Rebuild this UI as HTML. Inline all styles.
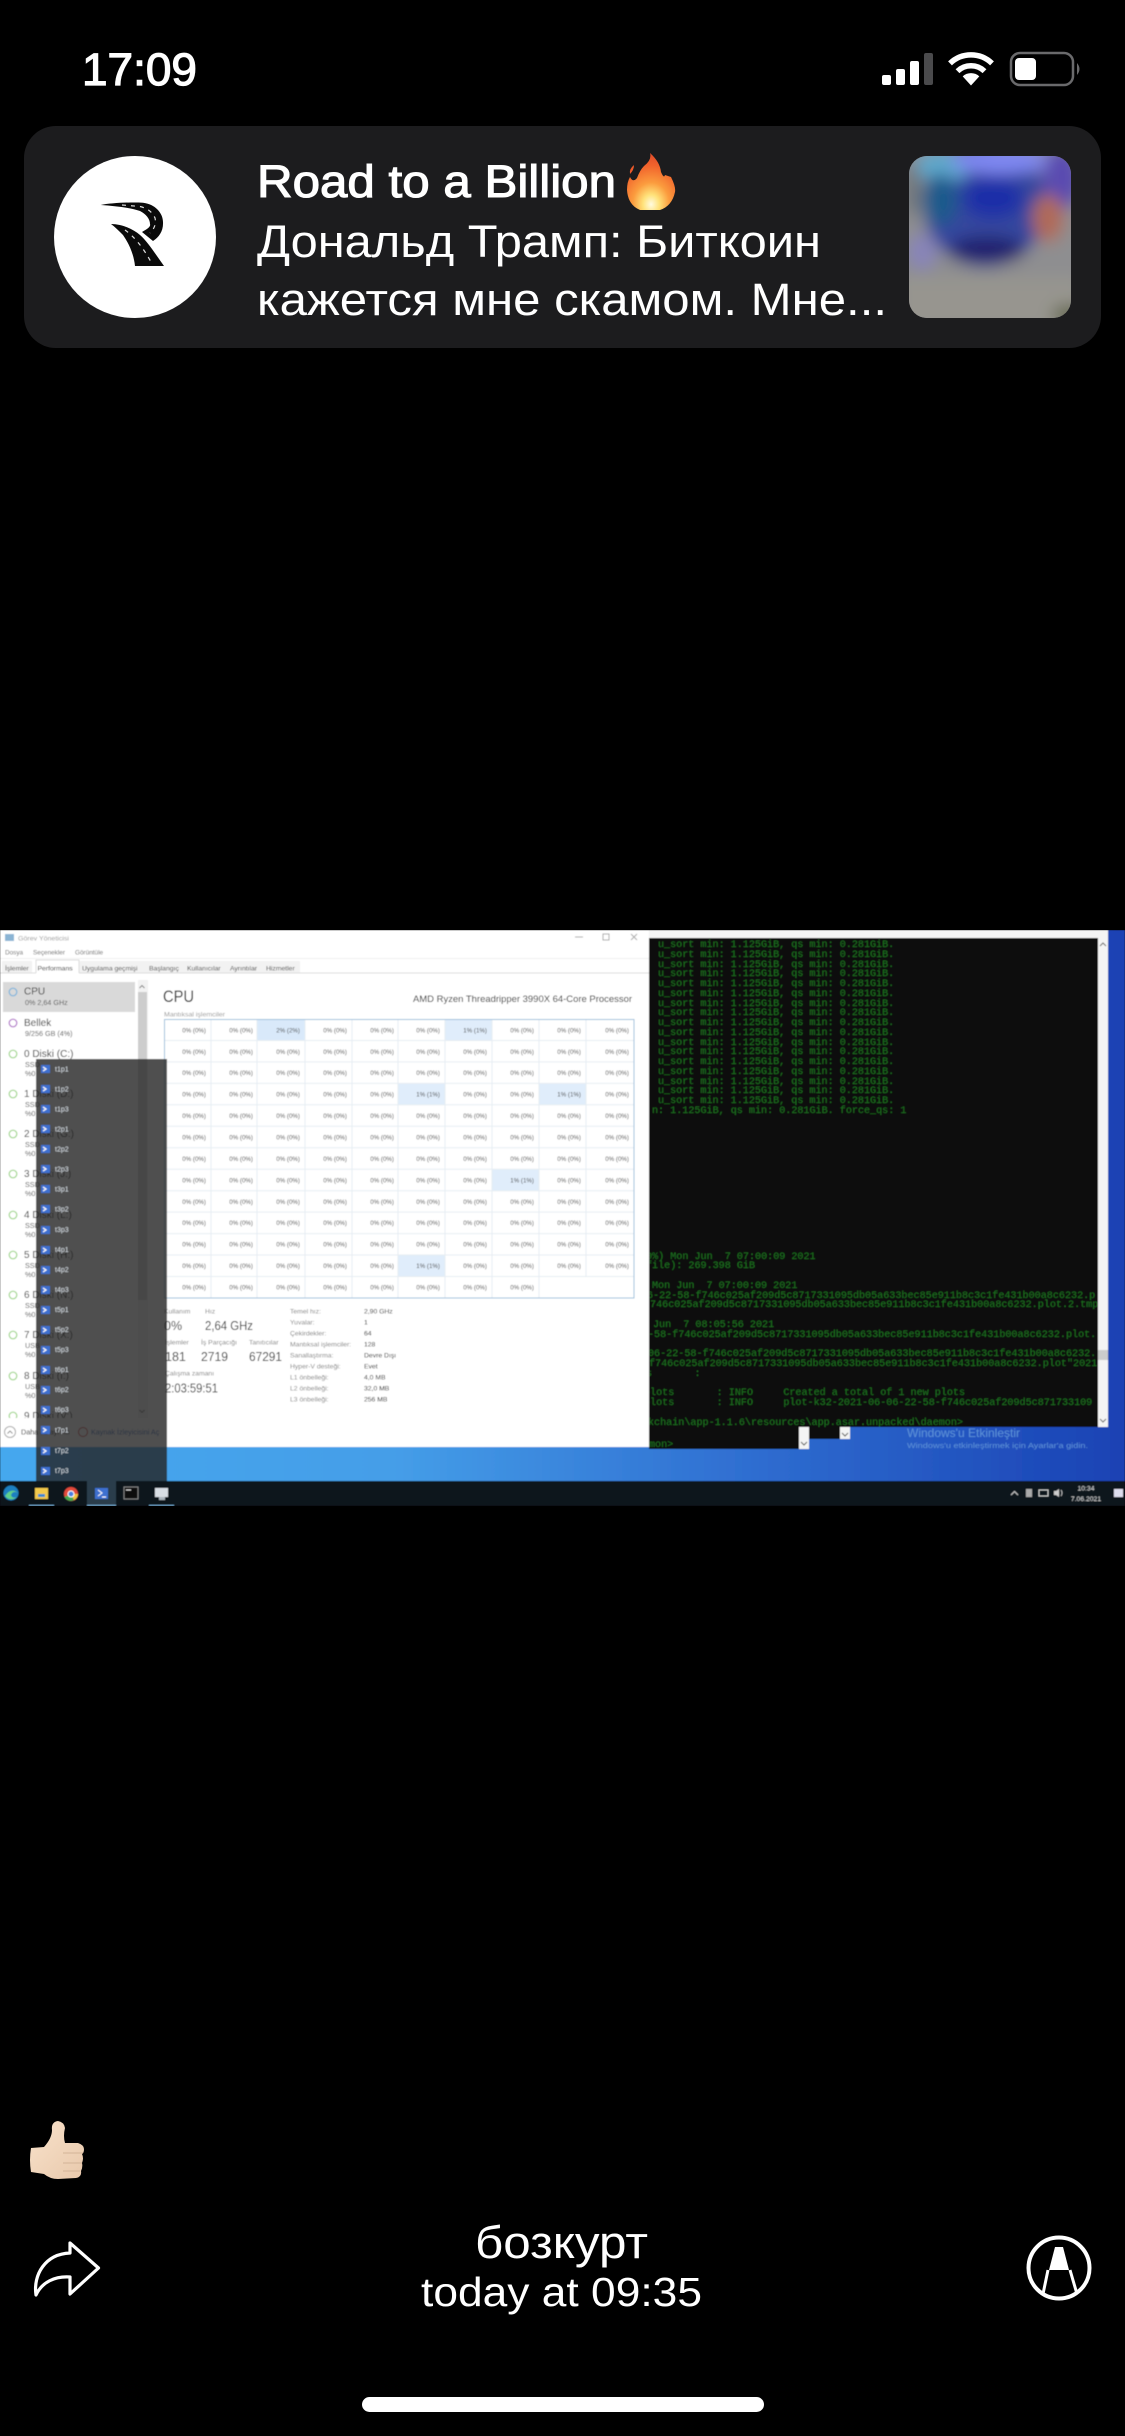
<!DOCTYPE html>
<html><head><meta charset="utf-8"><title>Screenshot</title>
<style>
html,body{margin:0;padding:0;background:#000;width:1125px;height:2436px;overflow:hidden}
svg{display:block;position:absolute;left:0;top:0}
text{font-family:"Liberation Sans",sans-serif}
.m{font-family:"Liberation Mono",monospace;font-size:10.1px;fill:#1b7320;white-space:pre}
.cell{font-size:6.2px;fill:#444}
.lbl{font-size:6.8px;fill:#808080}
.val{font-size:6.8px;fill:#222}
.big{font-size:12.5px;fill:#333}
.sb{font-size:7.2px;fill:#555}
.nm{font-size:10px;fill:#333}
.ov{font-size:7px;fill:#d4dbe2}
</style></head><body>
<svg width="1125" height="2436" viewBox="0 0 1125 2436" xmlns="http://www.w3.org/2000/svg">
<defs>
<filter id="b" x="-5%" y="-5%" width="110%" height="110%"><feGaussianBlur stdDeviation="0.6"/></filter>
<filter id="tb" x="-30%" y="-30%" width="160%" height="160%"><feGaussianBlur stdDeviation="8"/></filter>
<clipPath id="tc"><rect x="909" y="156" width="162" height="162" rx="18"/></clipPath>
<clipPath id="term"><rect x="649" y="938" width="449" height="489"/></clipPath>
<clipPath id="side"><rect x="0" y="980" width="137" height="438"/></clipPath>
<clipPath id="shot"><rect x="0" y="930" width="1125" height="576"/></clipPath>
<linearGradient id="wall" x1="0" x2="1" y1="0" y2="0"><stop offset="0" stop-color="#45a8ee"/><stop offset=".35" stop-color="#459ee8"/><stop offset=".65" stop-color="#3070d2"/><stop offset="1" stop-color="#1a42b4"/></linearGradient>
<radialGradient id="fire" cx=".5" cy=".9" r=".85"><stop offset="0" stop-color="#fffbe0"/><stop offset=".2" stop-color="#ffe27a"/><stop offset=".45" stop-color="#fb9c3e"/><stop offset=".8" stop-color="#f1632c"/><stop offset="1" stop-color="#e4502a"/></radialGradient>
<linearGradient id="skin" x1="0" x2="1" y1="0" y2="1"><stop offset="0" stop-color="#f9e2cb"/><stop offset="1" stop-color="#e8c9ac"/></linearGradient>
</defs>
<rect width="1125" height="2436" fill="#000"/>

<!-- status bar -->
<text x="82" y="85" font-size="45" fill="#fff" stroke="#fff" stroke-width="1.200" textLength="115" lengthAdjust="spacingAndGlyphs">17:09</text>
<rect x="882" y="75" width="9" height="10" rx="2" fill="#fff"/>
<rect x="896" y="69" width="9" height="16" rx="2" fill="#fff"/>
<rect x="910" y="61" width="9" height="24" rx="2" fill="#fff"/>
<rect x="924" y="53" width="9" height="32" rx="2" fill="#4a4a4c"/>
<path d="M950 63.400 A30.250 30.250 0 0 1 992 63.400" fill="none" stroke="#fff" stroke-width="5.500"/>
<path d="M957.500 71.200 A19.500 19.500 0 0 1 984.500 71.200" fill="none" stroke="#fff" stroke-width="5.500"/>
<path d="M971 85.500 L962.700 76.400 A12 12 0 0 1 979.300 76.400 Z" fill="#fff"/>
<rect x="1011" y="53" width="62" height="32" rx="9" fill="none" stroke="#6a6a6c" stroke-width="2.500"/>
<rect x="1015" y="58" width="21" height="22" rx="4" fill="#fff"/>
<path d="M1077 63 Q1082 69 1077 75 Z" fill="#6a6a6c"/>

<!-- notification -->
<rect x="24" y="126" width="1077" height="222" rx="32" fill="#1c1c1e"/>
<circle cx="135" cy="237" r="81" fill="#fff"/>
<path d="M100.700 205 C110 203 130 202 143 202.700 C155 204 163 213 163 222 C163.500 231 159 237 153 241 L142 232 C147 229 151 227 150 224 C150 219 146 214 140 211 C130 207.500 115 206 100.700 205 Z" fill="#0a0a0a"/>
<path d="M111 224 C122 224 133 229 140 235 C148 242 156 255 164 266 L135 266 C134 256 130 245 123 235 C119 231 115 227 111 224 Z" fill="#0a0a0a"/>
<path d="M122 205 L140 206.500 Q151 209 155 218 Q157 226 150 233" fill="none" stroke="#ddd" stroke-width="1.200" stroke-dasharray="4 5"/>
<path d="M125 230 Q139 240 151 262" fill="none" stroke="#ddd" stroke-width="1.200" stroke-dasharray="4 5"/>
<g clip-path="url(#tc)">
<rect x="909" y="156" width="162" height="162" fill="#8a8c90"/>
<g filter="url(#tb)">
<rect x="890" y="140" width="210" height="200" fill="#8e8e90"/>
<ellipse cx="985" cy="205" rx="62" ry="62" fill="#34479e"/>
<ellipse cx="1062" cy="178" rx="20" ry="32" fill="#5a4cb0"/>
<ellipse cx="943" cy="166" rx="28" ry="16" fill="#5ea8cc"/>
<ellipse cx="1000" cy="160" rx="48" ry="14" fill="#7f88f2"/>
<ellipse cx="993" cy="198" rx="30" ry="20" fill="#1e2ea8"/>
<ellipse cx="940" cy="200" rx="18" ry="26" fill="#1f5a8c"/>
<ellipse cx="987" cy="250" rx="38" ry="14" fill="#22246e"/>
<ellipse cx="1048" cy="218" rx="16" ry="24" fill="#b06a58"/>
<ellipse cx="922" cy="252" rx="14" ry="18" fill="#8884ba"/>
<rect x="900" y="278" width="180" height="50" fill="#97958f"/>
<ellipse cx="1070" cy="315" rx="18" ry="10" fill="#64684c"/>
<ellipse cx="912" cy="190" rx="9" ry="28" fill="#6f767a"/>
</g>
</g>
<text x="257" y="197" font-size="45" fill="#fff" stroke="#fff" stroke-width="1.100" textLength="359" lengthAdjust="spacingAndGlyphs">Road to a Billion</text>
<path d="M650 153 Q660 162 661 172 Q664 179 665 175 Q668 176 671 177 Q676 187 675 192 Q672 206 660 210 L640 210 Q628 205 627 190 Q627 182 630 177 Q633 183 637 178 Q640 170 644 166 Q652 160 650 153 Z" fill="url(#fire)"/>
<path d="M634 165 Q634 170 630 174 Q629 169 634 165 Z" fill="#ee5a2a"/>
<text x="257" y="257" font-size="45" fill="#fff" textLength="564" lengthAdjust="spacingAndGlyphs">Дональд Трамп: Биткоин</text>
<text x="257" y="315" font-size="45" fill="#fff" textLength="630" lengthAdjust="spacingAndGlyphs">кажется мне скамом. Мне...</text>

<!-- screenshot -->
<g clip-path="url(#shot)"><g filter="url(#b)">
<rect x="0" y="930" width="1125" height="576" fill="url(#wall)"/>

<!-- terminals -->
<rect x="649" y="930" width="459" height="497" fill="#f4f4f4"/>
<rect x="649" y="938" width="449" height="489" fill="#0d0d0d"/>
<path d="M1100 946 L1103 943 L1106 946" fill="none" stroke="#666" stroke-width="1"/>
<path d="M1100 1419 L1103 1422 L1106 1419" fill="none" stroke="#666" stroke-width="1"/>
<rect x="1098" y="1350" width="10" height="10" fill="#ccc"/>
<rect x="649" y="1427" width="150" height="22" fill="#0d0d0d"/>
<rect x="799" y="1427" width="10" height="22" fill="#f4f4f4"/>
<path d="M801 1442 L804 1445 L807 1442" fill="none" stroke="#555" stroke-width="1"/>
<rect x="809" y="1427" width="31" height="12" fill="#0d0d0d"/>
<rect x="840" y="1427" width="10" height="12" fill="#f4f4f4"/>
<path d="M842 1433 L845 1436 L848 1433" fill="none" stroke="#555" stroke-width="1"/>
<g clip-path="url(#term)">
<text class="m" x="658" y="947">u_sort min: 1.125GiB, qs min: 0.281GiB.</text>
<text class="m" x="658" y="957">u_sort min: 1.125GiB, qs min: 0.281GiB.</text>
<text class="m" x="658" y="967">u_sort min: 1.125GiB, qs min: 0.281GiB.</text>
<text class="m" x="658" y="976">u_sort min: 1.125GiB, qs min: 0.281GiB.</text>
<text class="m" x="658" y="986">u_sort min: 1.125GiB, qs min: 0.281GiB.</text>
<text class="m" x="658" y="996">u_sort min: 1.125GiB, qs min: 0.281GiB.</text>
<text class="m" x="658" y="1006">u_sort min: 1.125GiB, qs min: 0.281GiB.</text>
<text class="m" x="658" y="1015">u_sort min: 1.125GiB, qs min: 0.281GiB.</text>
<text class="m" x="658" y="1025">u_sort min: 1.125GiB, qs min: 0.281GiB.</text>
<text class="m" x="658" y="1035">u_sort min: 1.125GiB, qs min: 0.281GiB.</text>
<text class="m" x="658" y="1045">u_sort min: 1.125GiB, qs min: 0.281GiB.</text>
<text class="m" x="658" y="1054">u_sort min: 1.125GiB, qs min: 0.281GiB.</text>
<text class="m" x="658" y="1064">u_sort min: 1.125GiB, qs min: 0.281GiB.</text>
<text class="m" x="658" y="1074">u_sort min: 1.125GiB, qs min: 0.281GiB.</text>
<text class="m" x="658" y="1084">u_sort min: 1.125GiB, qs min: 0.281GiB.</text>
<text class="m" x="658" y="1093">u_sort min: 1.125GiB, qs min: 0.281GiB.</text>
<text class="m" x="658" y="1103">u_sort min: 1.125GiB, qs min: 0.281GiB.</text>
<text class="m" x="652" y="1113">n: 1.125GiB, qs min: 0.281GiB. force_qs: 1</text>
<text class="m" x="646" y="1259">0%) Mon Jun  7 07:00:09 2021</text>
<text class="m" x="646" y="1268">file): 269.398 GiB</text>
<text class="m" x="652" y="1288">Mon Jun  7 07:00:09 2021</text>
<text class="m" x="647" y="1298">6-22-58-f746c025af209d5c8717331095db05a633bec85e911b8c3c1fe431b00a8c6232.p</text>
<text class="m" x="644" y="1307">f746c025af209d5c8717331095db05a633bec85e911b8c3c1fe431b00a8c6232.plot.2.tmp</text>
<text class="m" x="653" y="1327">Jun  7 08:05:56 2021</text>
<text class="m" x="648" y="1337">-58-f746c025af209d5c8717331095db05a633bec85e911b8c3c1fe431b00a8c6232.plot.</text>
<text class="m" x="648" y="1356">06-22-58-f746c025af209d5c8717331095db05a633bec85e911b8c3c1fe431b00a8c6232.</text>
<text class="m" x="649" y="1366">f746c025af209d5c8717331095db05a633bec85e911b8c3c1fe431b00a8c6232.plot"2021</text>
<text class="m" x="646" y="1376">s       :</text>
<text class="m" x="644" y="1395">plots       : INFO     Created a total of 1 new plots</text>
<text class="m" x="644" y="1405">plots       : INFO     plot-k32-2021-06-06-22-58-f746c025af209d5c871733109</text>
<text class="m" x="648" y="1425">kchain\app-1.1.6\resources\app.asar.unpacked\daemon&gt;</text>
</g>
<text class="m" x="649" y="1447">mon&gt;</text>
<text x="907" y="1437" font-size="12" fill="#5c92d8" textLength="113" lengthAdjust="spacingAndGlyphs">Windows'u Etkinleştir</text>
<text x="907" y="1448" font-size="7.6" fill="#5c92d8" textLength="181" lengthAdjust="spacingAndGlyphs">Windows'u etkinleştirmek için Ayarlar'a gidin.</text>

<!-- task manager -->
<rect x="0" y="930" width="649" height="517" fill="#fff"/>
<rect x="5" y="934" width="9" height="7" fill="#8ab4d4"/>
<text x="18" y="940.500" font-size="6.8" fill="#999" textLength="51" lengthAdjust="spacingAndGlyphs">Görev Yöneticisi</text>
<text y="954.500" font-size="6.4" fill="#666"><tspan x="5">Dosya</tspan><tspan x="33">Seçenekler</tspan><tspan x="75">Görüntüle</tspan></text>
<path d="M575 937 H583" stroke="#aaa" stroke-width="1"/>
<rect x="603" y="934" width="6" height="6" fill="none" stroke="#aaa" stroke-width="1"/>
<path d="M631 934 L637 940 M637 934 L631 940" stroke="#aaa" stroke-width="1"/>
<path d="M0 958.500 H649" stroke="#f0f0f0" stroke-width="1"/>
<rect x="2" y="961" width="30" height="12" fill="#f2f2f2"/>
<rect x="79" y="961" width="221" height="12" fill="#f2f2f2"/>
<path d="M0 973 H36 M79 973 H649" stroke="#dcdcdc" stroke-width="1"/>
<path d="M36 973 V960 H79 V973" fill="#fff" stroke="#dcdcdc" stroke-width="1"/>
<text y="970.500" font-size="6.8" fill="#444"><tspan x="5">İşlemler</tspan><tspan x="37.500" fill="#222">Performans</tspan><tspan x="82">Uygulama geçmişi</tspan><tspan x="149">Başlangıç</tspan><tspan x="187">Kullanıcılar</tspan><tspan x="230">Ayrıntılar</tspan><tspan x="266">Hizmetler</tspan></text>

<rect x="3" y="982" width="132" height="30" fill="#d9d9d9"/>
<rect x="138" y="980" width="10" height="438" fill="#f2f2f2"/>
<rect x="138" y="992" width="9" height="308" fill="#cdcdcd"/>
<path d="M139.500 988 L142 985.500 L144.500 988" fill="none" stroke="#777" stroke-width=".9"/>
<path d="M139.500 1410 L142 1412.500 L144.500 1410" fill="none" stroke="#777" stroke-width=".9"/>
<g clip-path="url(#side)">
<g fill="none" stroke-width="1.200">
<circle cx="13" cy="992" r="3.800" stroke="#7eb4dc"/>
<circle cx="13" cy="1023" r="3.800" stroke="#b070c8"/>
<g stroke="#9fd68a">
<circle cx="13" cy="1054" r="3.800"/><circle cx="13" cy="1094" r="3.800"/><circle cx="13" cy="1134" r="3.800"/><circle cx="13" cy="1174" r="3.800"/><circle cx="13" cy="1215" r="3.800"/><circle cx="13" cy="1255" r="3.800"/><circle cx="13" cy="1295" r="3.800"/><circle cx="13" cy="1335" r="3.800"/><circle cx="13" cy="1376" r="3.800"/><circle cx="13" cy="1416" r="3.800"/>
</g></g>
<text class="nm" x="24" y="994.500">CPU</text><text class="sb" x="25" y="1005">0% 2,64 GHz</text>
<text class="nm" x="24" y="1026">Bellek</text><text class="sb" x="25" y="1036">9/256 GB (4%)</text>
<text class="nm" x="24" y="1057">0 Diski (C:)</text><text class="sb" x="25" y="1067">SSD</text><text class="sb" x="25" y="1076">%0</text>
<text class="nm" x="24" y="1097">1 Diski (D:)</text><text class="sb" x="25" y="1107">SSD</text><text class="sb" x="25" y="1116">%0</text>
<text class="nm" x="24" y="1137">2 Diski (G:)</text><text class="sb" x="25" y="1147">SSD</text><text class="sb" x="25" y="1156">%0</text>
<text class="nm" x="24" y="1177">3 Diski (J:)</text><text class="sb" x="25" y="1187">SSD</text><text class="sb" x="25" y="1196">%0</text>
<text class="nm" x="24" y="1218">4 Diski (L:)</text><text class="sb" x="25" y="1228">SSD</text><text class="sb" x="25" y="1237">%0</text>
<text class="nm" x="24" y="1258">5 Diski (H:)</text><text class="sb" x="25" y="1268">SSD</text><text class="sb" x="25" y="1277">%0</text>
<text class="nm" x="24" y="1298">6 Diski (N:)</text><text class="sb" x="25" y="1308">SSD</text><text class="sb" x="25" y="1317">%0</text>
<text class="nm" x="24" y="1338">7 Diski (X:)</text><text class="sb" x="25" y="1348">USB</text><text class="sb" x="25" y="1357">%0</text>
<text class="nm" x="24" y="1379">8 Diski (I:)</text><text class="sb" x="25" y="1389">USB</text><text class="sb" x="25" y="1398">%0</text>
<text class="nm" x="24" y="1419">9 Diski (V:)</text>
</g>
<circle cx="10" cy="1432" r="5.500" fill="none" stroke="#aaa" stroke-width="1"/>
<path d="M7.500 1433.500 L10 1431 L12.500 1433.500" fill="none" stroke="#888" stroke-width=".9"/>
<text x="21" y="1434.500" font-size="7.2" fill="#333">Daha az ayrıntı</text>
<circle cx="83" cy="1432" r="4.500" fill="none" stroke="#d05050" stroke-width="1"/>
<text x="91" y="1434.500" font-size="7.2" fill="#3a66b8">Kaynak İzleyicisini Aç</text>

<text x="163" y="1002" font-size="16.500" fill="#222" textLength="31" lengthAdjust="spacingAndGlyphs">CPU</text>
<text x="164" y="1016.500" font-size="6.200" fill="#999" textLength="61" lengthAdjust="spacingAndGlyphs">Mantıksal işlemciler</text>
<text x="413" y="1002" font-size="9.500" fill="#222" textLength="219" lengthAdjust="spacingAndGlyphs">AMD Ryzen Threadripper 3990X 64-Core Processor</text>

<rect x="257" y="1019" width="48" height="21.500" fill="#d9e9fa"/>
<rect x="445" y="1019" width="47" height="21.500" fill="#e0edfb"/>
<rect x="398" y="1083.400" width="47" height="21.500" fill="#e0edfb"/>
<rect x="539" y="1083.400" width="47" height="21.500" fill="#e0edfb"/>
<rect x="492" y="1169.200" width="47" height="21.500" fill="#e0edfb"/>
<rect x="398" y="1255" width="47" height="21.500" fill="#e0edfb"/>
<path d="M164 1040.500H634M164 1061.900H634M164 1083.400H634M164 1104.800H634M164 1126.300H634M164 1147.800H634M164 1169.200H634M164 1190.700H634M164 1212.100H634M164 1233.600H634M164 1255H634M164 1276.500H634M211 1019V1298M257 1019V1298M305 1019V1298M352 1019V1298M398 1019V1298M445 1019V1298M492 1019V1298M539 1019V1298M586 1019V1276.500" stroke="#e6edf3" stroke-width="1" fill="none"/>
<rect x="164.500" y="1019.500" width="469.500" height="278.500" fill="none" stroke="#9cc0dc" stroke-width="1"/>

<g text-anchor="end">
<text class="cell" y="1032.500"><tspan x="206">0% (0%)</tspan><tspan x="253">0% (0%)</tspan><tspan x="300">2% (2%)</tspan><tspan x="347">0% (0%)</tspan><tspan x="394">0% (0%)</tspan><tspan x="440">0% (0%)</tspan><tspan x="487">1% (1%)</tspan><tspan x="534">0% (0%)</tspan><tspan x="581">0% (0%)</tspan><tspan x="629">0% (0%)</tspan></text>
<text class="cell" y="1054"><tspan x="206">0% (0%)</tspan><tspan x="253">0% (0%)</tspan><tspan x="300">0% (0%)</tspan><tspan x="347">0% (0%)</tspan><tspan x="394">0% (0%)</tspan><tspan x="440">0% (0%)</tspan><tspan x="487">0% (0%)</tspan><tspan x="534">0% (0%)</tspan><tspan x="581">0% (0%)</tspan><tspan x="629">0% (0%)</tspan></text>
<text class="cell" y="1075"><tspan x="206">0% (0%)</tspan><tspan x="253">0% (0%)</tspan><tspan x="300">0% (0%)</tspan><tspan x="347">0% (0%)</tspan><tspan x="394">0% (0%)</tspan><tspan x="440">0% (0%)</tspan><tspan x="487">0% (0%)</tspan><tspan x="534">0% (0%)</tspan><tspan x="581">0% (0%)</tspan><tspan x="629">0% (0%)</tspan></text>
<text class="cell" y="1096.500"><tspan x="206">0% (0%)</tspan><tspan x="253">0% (0%)</tspan><tspan x="300">0% (0%)</tspan><tspan x="347">0% (0%)</tspan><tspan x="394">0% (0%)</tspan><tspan x="440">1% (1%)</tspan><tspan x="487">0% (0%)</tspan><tspan x="534">0% (0%)</tspan><tspan x="581">1% (1%)</tspan><tspan x="629">0% (0%)</tspan></text>
<text class="cell" y="1118"><tspan x="206">0% (0%)</tspan><tspan x="253">0% (0%)</tspan><tspan x="300">0% (0%)</tspan><tspan x="347">0% (0%)</tspan><tspan x="394">0% (0%)</tspan><tspan x="440">0% (0%)</tspan><tspan x="487">0% (0%)</tspan><tspan x="534">0% (0%)</tspan><tspan x="581">0% (0%)</tspan><tspan x="629">0% (0%)</tspan></text>
<text class="cell" y="1139.500"><tspan x="206">0% (0%)</tspan><tspan x="253">0% (0%)</tspan><tspan x="300">0% (0%)</tspan><tspan x="347">0% (0%)</tspan><tspan x="394">0% (0%)</tspan><tspan x="440">0% (0%)</tspan><tspan x="487">0% (0%)</tspan><tspan x="534">0% (0%)</tspan><tspan x="581">0% (0%)</tspan><tspan x="629">0% (0%)</tspan></text>
<text class="cell" y="1161"><tspan x="206">0% (0%)</tspan><tspan x="253">0% (0%)</tspan><tspan x="300">0% (0%)</tspan><tspan x="347">0% (0%)</tspan><tspan x="394">0% (0%)</tspan><tspan x="440">0% (0%)</tspan><tspan x="487">0% (0%)</tspan><tspan x="534">0% (0%)</tspan><tspan x="581">0% (0%)</tspan><tspan x="629">0% (0%)</tspan></text>
<text class="cell" y="1182.500"><tspan x="206">0% (0%)</tspan><tspan x="253">0% (0%)</tspan><tspan x="300">0% (0%)</tspan><tspan x="347">0% (0%)</tspan><tspan x="394">0% (0%)</tspan><tspan x="440">0% (0%)</tspan><tspan x="487">0% (0%)</tspan><tspan x="534">1% (1%)</tspan><tspan x="581">0% (0%)</tspan><tspan x="629">0% (0%)</tspan></text>
<text class="cell" y="1204"><tspan x="206">0% (0%)</tspan><tspan x="253">0% (0%)</tspan><tspan x="300">0% (0%)</tspan><tspan x="347">0% (0%)</tspan><tspan x="394">0% (0%)</tspan><tspan x="440">0% (0%)</tspan><tspan x="487">0% (0%)</tspan><tspan x="534">0% (0%)</tspan><tspan x="581">0% (0%)</tspan><tspan x="629">0% (0%)</tspan></text>
<text class="cell" y="1225"><tspan x="206">0% (0%)</tspan><tspan x="253">0% (0%)</tspan><tspan x="300">0% (0%)</tspan><tspan x="347">0% (0%)</tspan><tspan x="394">0% (0%)</tspan><tspan x="440">0% (0%)</tspan><tspan x="487">0% (0%)</tspan><tspan x="534">0% (0%)</tspan><tspan x="581">0% (0%)</tspan><tspan x="629">0% (0%)</tspan></text>
<text class="cell" y="1246.500"><tspan x="206">0% (0%)</tspan><tspan x="253">0% (0%)</tspan><tspan x="300">0% (0%)</tspan><tspan x="347">0% (0%)</tspan><tspan x="394">0% (0%)</tspan><tspan x="440">0% (0%)</tspan><tspan x="487">0% (0%)</tspan><tspan x="534">0% (0%)</tspan><tspan x="581">0% (0%)</tspan><tspan x="629">0% (0%)</tspan></text>
<text class="cell" y="1268"><tspan x="206">0% (0%)</tspan><tspan x="253">0% (0%)</tspan><tspan x="300">0% (0%)</tspan><tspan x="347">0% (0%)</tspan><tspan x="394">0% (0%)</tspan><tspan x="440">1% (1%)</tspan><tspan x="487">0% (0%)</tspan><tspan x="534">0% (0%)</tspan><tspan x="581">0% (0%)</tspan><tspan x="629">0% (0%)</tspan></text>
<text class="cell" y="1289.500"><tspan x="206">0% (0%)</tspan><tspan x="253">0% (0%)</tspan><tspan x="300">0% (0%)</tspan><tspan x="347">0% (0%)</tspan><tspan x="394">0% (0%)</tspan><tspan x="440">0% (0%)</tspan><tspan x="487">0% (0%)</tspan><tspan x="534">0% (0%)</tspan></text>
</g>

<text class="lbl" y="1313.500"><tspan x="164">Kullanım</tspan><tspan x="205">Hız</tspan></text>
<text class="big" x="164" y="1330">0%</text>
<text class="big" x="205" y="1330" textLength="48" lengthAdjust="spacingAndGlyphs">2,64 GHz</text>
<text class="lbl" y="1344.500"><tspan x="165">İşlemler</tspan><tspan x="201">İş Parçacığı</tspan><tspan x="249">Tanıtıcılar</tspan></text>
<text class="big" x="165" y="1361">181</text>
<text class="big" x="201" y="1361" textLength="27" lengthAdjust="spacingAndGlyphs">2719</text>
<text class="big" x="249" y="1361" textLength="33" lengthAdjust="spacingAndGlyphs">67291</text>
<text class="lbl" x="165" y="1375.500">Çalışma zamanı</text>
<text class="big" x="165" y="1392.500" textLength="53" lengthAdjust="spacingAndGlyphs">2:03:59:51</text>
<text class="lbl" x="290" y="1313.500">Temel hız:</text><text class="val" x="364" y="1313.500">2,90 GHz</text>
<text class="lbl" x="290" y="1324.500">Yuvalar:</text><text class="val" x="364" y="1324.500">1</text>
<text class="lbl" x="290" y="1335.500">Çekirdekler:</text><text class="val" x="364" y="1335.500">64</text>
<text class="lbl" x="290" y="1346.500">Mantıksal işlemciler:</text><text class="val" x="364" y="1346.500">128</text>
<text class="lbl" x="290" y="1357.500">Sanallaştırma:</text><text class="val" x="364" y="1357.500">Devre Dışı</text>
<text class="lbl" x="290" y="1368.500">Hyper-V desteği:</text><text class="val" x="364" y="1368.500">Evet</text>
<text class="lbl" x="290" y="1379.500">L1 önbelleği:</text><text class="val" x="364" y="1379.500">4,0 MB</text>
<text class="lbl" x="290" y="1390.500">L2 önbelleği:</text><text class="val" x="364" y="1390.500">32,0 MB</text>
<text class="lbl" x="290" y="1401.500">L3 önbelleği:</text><text class="val" x="364" y="1401.500">256 MB</text>

<!-- jump list overlay -->
<rect x="36" y="1059" width="131" height="422" fill="#242424" fill-opacity=".8"/>
<g fill="#3d6fd0">
<rect x="41" y="1065" width="9" height="8"/><rect x="41" y="1085" width="9" height="8"/><rect x="41" y="1105" width="9" height="8"/><rect x="41" y="1125" width="9" height="8"/><rect x="41" y="1145" width="9" height="8"/><rect x="41" y="1165" width="9" height="8"/><rect x="41" y="1185" width="9" height="8"/><rect x="41" y="1205" width="9" height="8"/><rect x="41" y="1226" width="9" height="8"/><rect x="41" y="1246" width="9" height="8"/><rect x="41" y="1266" width="9" height="8"/><rect x="41" y="1286" width="9" height="8"/><rect x="41" y="1306" width="9" height="8"/><rect x="41" y="1326" width="9" height="8"/><rect x="41" y="1346" width="9" height="8"/><rect x="41" y="1366" width="9" height="8"/><rect x="41" y="1386" width="9" height="8"/><rect x="41" y="1406" width="9" height="8"/><rect x="41" y="1426" width="9" height="8"/><rect x="41" y="1447" width="9" height="8"/><rect x="41" y="1467" width="9" height="8"/>
</g>
<path d="M43 1067l3 2-3 2M43 1087l3 2-3 2M43 1107l3 2-3 2M43 1127l3 2-3 2M43 1147l3 2-3 2M43 1167l3 2-3 2M43 1187l3 2-3 2M43 1207l3 2-3 2M43 1228l3 2-3 2M43 1248l3 2-3 2M43 1268l3 2-3 2M43 1288l3 2-3 2M43 1308l3 2-3 2M43 1328l3 2-3 2M43 1348l3 2-3 2M43 1368l3 2-3 2M43 1388l3 2-3 2M43 1408l3 2-3 2M43 1428l3 2-3 2M43 1449l3 2-3 2M43 1469l3 2-3 2" fill="none" stroke="#fff" stroke-width="1.200"/>
<text class="ov" x="55" y="1071.500">t1p1</text><text class="ov" x="55" y="1091.500">t1p2</text><text class="ov" x="55" y="1111.500">t1p3</text><text class="ov" x="55" y="1131.500">t2p1</text><text class="ov" x="55" y="1151.500">t2p2</text><text class="ov" x="55" y="1171.500">t2p3</text><text class="ov" x="55" y="1191.500">t3p1</text><text class="ov" x="55" y="1211.500">t3p2</text><text class="ov" x="55" y="1232">t3p3</text><text class="ov" x="55" y="1252">t4p1</text><text class="ov" x="55" y="1272">t4p2</text><text class="ov" x="55" y="1292">t4p3</text><text class="ov" x="55" y="1312">t5p1</text><text class="ov" x="55" y="1332">t5p2</text><text class="ov" x="55" y="1352">t5p3</text><text class="ov" x="55" y="1372">t6p1</text><text class="ov" x="55" y="1392">t6p2</text><text class="ov" x="55" y="1412">t6p3</text><text class="ov" x="55" y="1432.500">t7p1</text><text class="ov" x="55" y="1453">t7p2</text><text class="ov" x="55" y="1473">t7p3</text>

<!-- taskbar -->
<rect x="0" y="1481" width="1125" height="25" fill="#07151f"/>
<rect x="87" y="1481" width="29" height="25" fill="#2b3d4c"/>
<circle cx="11" cy="1493" r="7.500" fill="#1f7fc0"/><path d="M5 1496 Q11 1487 18 1493 Q13 1490 11 1495 Q12 1499 17 1497 Q10 1502 5 1496Z" fill="#5fd08a"/>
<rect x="35" y="1488" width="13" height="11" fill="#f2c94c"/><rect x="38" y="1494" width="7" height="3" fill="#3a8ad0"/>
<circle cx="71" cy="1494" r="7" fill="#e24a3a"/><path d="M71 1494 L64.500 1497 A7 7 0 0 0 74 1500 Z" fill="#3fa84f"/><path d="M71 1494 L78 1494 A7 7 0 0 1 74 1500 Z" fill="#f3c33c"/><circle cx="71" cy="1494" r="3" fill="#4a80e0" stroke="#fff" stroke-width="1"/>
<rect x="95" y="1488" width="13" height="11" fill="#3d6fd0"/><path d="M98 1490 L102 1493 L98 1496 M102 1497 H106" fill="none" stroke="#fff" stroke-width="1"/>
<rect x="124" y="1487" width="14" height="12" fill="#0c0c0c" stroke="#999" stroke-width=".8"/><path d="M126 1490 H131" stroke="#ddd" stroke-width="1"/>
<rect x="155" y="1488" width="13" height="9" fill="#d8dee4"/><rect x="159" y="1497" width="6" height="3" fill="#aab4bc"/>
<path d="M29 1505.500 H54 M87 1505.500 H116 M149 1505.500 H174" stroke="#7cb6e0" stroke-width="1.200"/>
<path d="M1011 1495 L1014.500 1491.500 L1018 1495" fill="none" stroke="#ccc" stroke-width="1"/>
<rect x="1026" y="1489" width="6" height="8" fill="#aaa"/>
<rect x="1039" y="1490" width="9" height="6" fill="none" stroke="#ccc" stroke-width="1"/>
<path d="M1054 1491 H1056 L1059 1489 V1497 L1056 1495 H1054 Z" fill="#ccc"/>
<path d="M1061 1490 Q1063 1493 1061 1496" fill="none" stroke="#ccc" stroke-width=".8"/>
<text x="1086" y="1490.500" font-size="6.800" fill="#ddd" text-anchor="middle">10:34</text>
<text x="1086" y="1501" font-size="6.800" fill="#ddd" text-anchor="middle">7.06.2021</text>
<rect x="1114" y="1489" width="9" height="8" fill="#dde"/>
</g></g>

<!-- bottom -->
<path d="M58 2121 Q64 2122 65 2128 Q63 2136 65 2143 L78 2143 Q84 2145 84 2149 Q84 2153 82 2154 Q84 2158 82 2163 Q83 2167 81 2171 Q82 2177 76 2178 L58 2179 Q50 2179 44 2174 L31 2172 Q29 2160 31 2148 L44 2147 Q52 2138 52 2130 Q51 2122 58 2121 Z" fill="url(#skin)"/>
<path d="M63 2153 H83 M63 2163 H82 M63 2171 H80" stroke="#d3b498" stroke-width="1" fill="none"/>
<path d="M70 2243 L98.500 2268 L70 2294 V2277 C55 2276 42 2282 36 2295 C33 2275 45 2254 70 2253 Z" fill="none" stroke="#fff" stroke-width="3.200" stroke-linejoin="round"/>
<text x="475" y="2258" font-size="45" fill="#fff" textLength="173" lengthAdjust="spacingAndGlyphs">бозкурт</text>
<text x="421" y="2306" font-size="41" fill="#fff" textLength="281" lengthAdjust="spacingAndGlyphs">today at 09:35</text>
<circle cx="1059" cy="2268" r="30.500" fill="none" stroke="#fff" stroke-width="4"/>
<path d="M1055 2247 H1063 L1069 2270 H1049 Z" fill="#fff"/>
<path d="M1048 2270 L1043 2294 M1070 2270 L1077 2294" stroke="#fff" stroke-width="3" fill="none"/>
<rect x="362" y="2397" width="402" height="15" rx="7.500" fill="#fff"/>
</svg>
</body></html>
